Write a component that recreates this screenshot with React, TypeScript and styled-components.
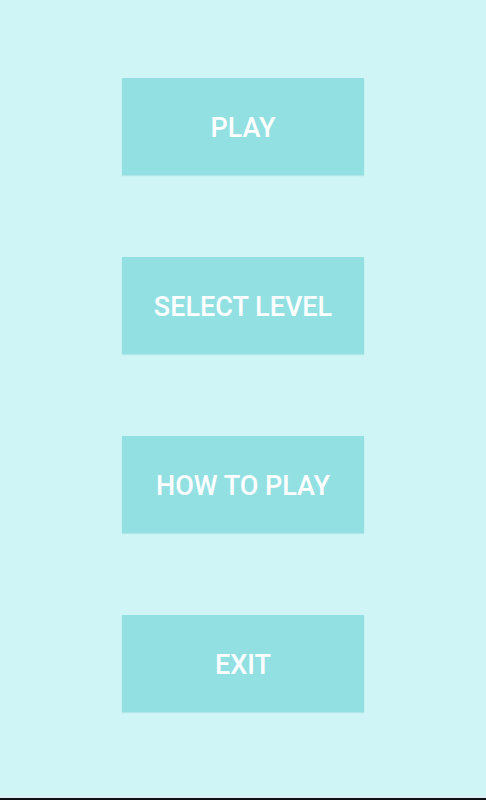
import React from "react";
import styled, {createGlobalStyle} from "styled-components";

const GlobalStyle = createGlobalStyle`
  html, body {
    margin: 0;
    padding: 0;
    background: #cff5f6;
  }
  * {
    box-sizing: border-box;
  }
`

const Screen = styled.div`
  display: flex;
  flex-direction: column;
  width: 486px;
  height: 800px;
  background: #cff5f6;
  font-family: Roboto, "Noto Sans", sans-serif;
`

const Menu = styled.div`
  flex: 1;
  display: flex;
  flex-direction: column;
  align-items: center;
  gap: 82px;
  padding-top: 78px;
`

const MenuButton = styled.button`
  width: 242px;
  height: 97px;
  border: none;
  border-radius: 0;
  background: #93e0e3;
  color: #ffffff;
  font-family: Roboto, "Noto Sans", sans-serif;
  font-size: 27px;
  font-weight: 500;
  letter-spacing: 0;
  padding: 3px 0 0;
  box-shadow: 0 1px 1px rgba(120, 200, 205, 0.35);
  cursor: pointer;
`

const NavEdge = styled.div`
  height: 4px;
  border-top: 2px solid #dcf0f3;
  background: #0c0f14;
`

const items = ["PLAY", "SELECT LEVEL", "HOW TO PLAY", "EXIT"];

const App = () => {
  return (
    <>
      <GlobalStyle/>
      <Screen>
        <Menu>
          {items.map((label) => (
            <MenuButton key={label}>{label}</MenuButton>
          ))}
        </Menu>
        <NavEdge/>
      </Screen>
    </>
  );
};

export default App;
